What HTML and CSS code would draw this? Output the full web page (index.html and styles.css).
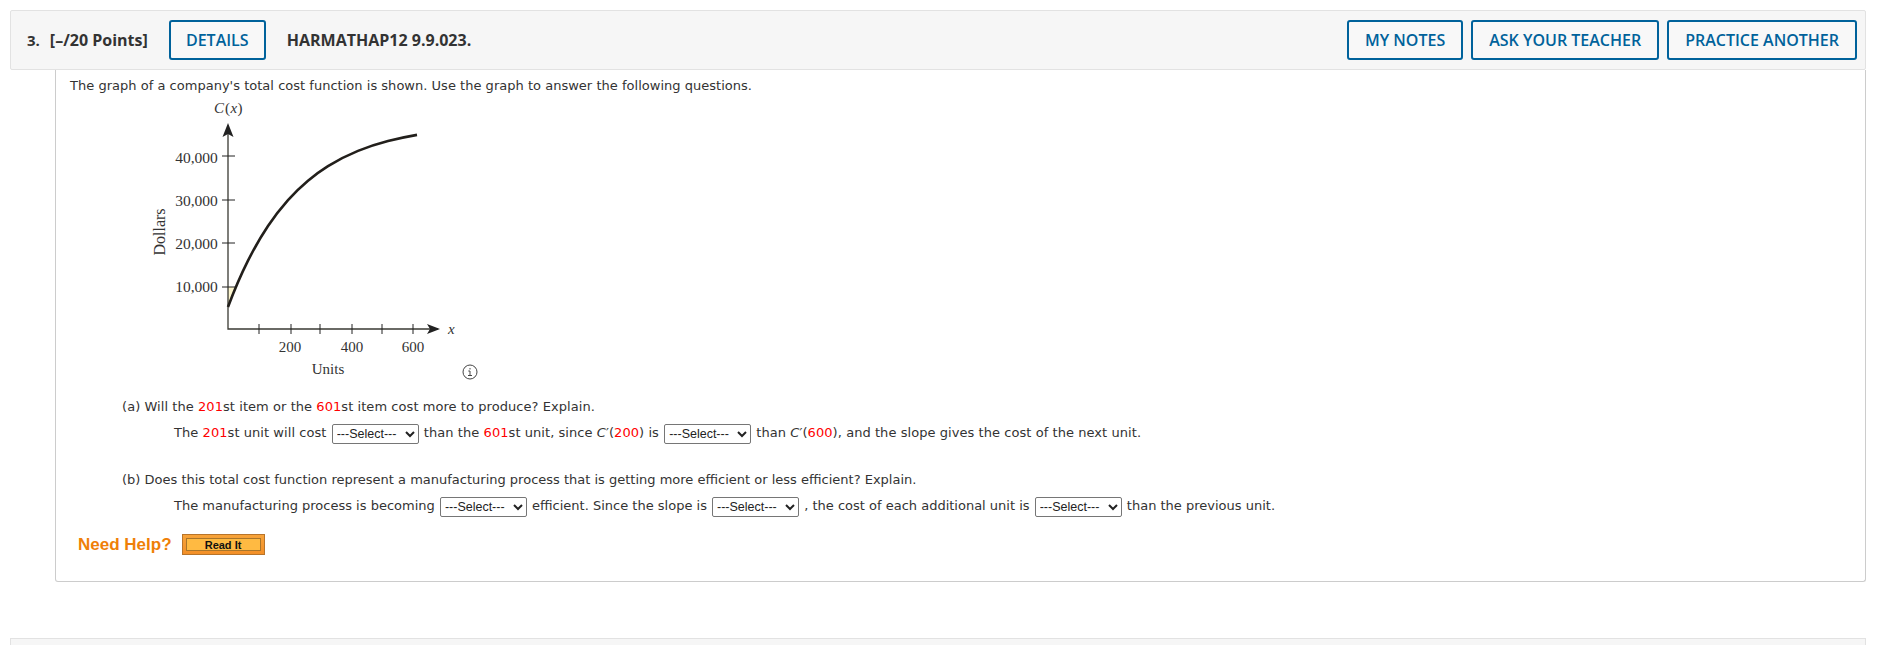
FILE: index.html
```html
<!DOCTYPE html>
<html lang="en">
<head>
<meta charset="utf-8">
<title>Question 3</title>
<link rel="stylesheet" href="styles.css">
</head>
<body>
<section class="question">
  <header class="bar">
    <span class="num">3.</span>
    <span class="points">[–/20 Points]</span>
    <button class="btn details">DETAILS</button>
    <span class="code">HARMATHAP12 9.9.023.</span>
    <div class="actions">
      <button class="btn">MY NOTES</button>
      <button class="btn">ASK YOUR TEACHER</button>
      <button class="btn">PRACTICE ANOTHER</button>
    </div>
  </header>
  <div class="card">
    <p class="intro">The graph of a company's total cost function is shown. Use the graph to answer the following questions.</p>
    <svg class="graph" width="340" height="290" viewBox="0 0 340 290">
      <text class="g-it" x="64" y="20">C</text><text class="g-t" x="75" y="20">(</text><text class="g-it" x="80.500" y="20">x</text><text class="g-t" x="87.500" y="20">)</text>
      <path class="fill" d="M78 194H85C83 200 80 207 78 214Z"/>
      <path class="axis" d="M78 34V236H288"/>
      <path class="head" d="M78 30L83.500 44L78 41L72.500 44Z"/>
      <path class="head" d="M290 236L277 231L280 236L277 241Z"/>
      <path class="tick" d="M72 63H85M72 107H85M72 150H85M72 194H85M109 231V241M141 231V241M170 231V241M202 231V241M232 231V241M263 231V241"/>
      <path class="curve" d="M78 214C84.670 196.200 91.330 181 98 167.700C104.670 154.400 111.330 143 118 133C124.670 123 131.330 114.600 138 107.100C144.670 99.600 151.330 93.300 158 87.700C164.670 82.100 171.330 77.400 178 73.200C188 66.900 198 61.950 208 57.900C218 53.850 228 50.700 238 48.100C247.670 45.570 257.330 43.560 267 41.900"/>
      <text class="g-t g-num" x="46.500" y="70" text-anchor="middle">40,000</text>
      <text class="g-t g-num" x="46.500" y="113" text-anchor="middle">30,000</text>
      <text class="g-t g-num" x="46.500" y="156" text-anchor="middle">20,000</text>
      <text class="g-t g-num" x="46.500" y="199" text-anchor="middle">10,000</text>
      <text class="g-t" x="140" y="259" text-anchor="middle">200</text>
      <text class="g-t" x="202" y="259" text-anchor="middle">400</text>
      <text class="g-t" x="263" y="259" text-anchor="middle">600</text>
      <text class="g-it" x="298" y="241">x</text>
      <text class="g-t" x="178" y="281" text-anchor="middle">Units</text>
      <text class="g-t g-lg" transform="translate(15 139) rotate(-90)" text-anchor="middle">Dollars</text>
      <circle class="info" cx="320" cy="279" r="7"/>
      <path class="info-i" d="M320 275V276.500M318.300 278H320V282.500M318 282.500H322"/>
    </svg>
    <div class="part first">
      <p class="prompt">(a) Will the <b class="red">201</b>st item or the <b class="red">601</b>st item cost more to produce? Explain.</p>
      <p class="answer">The <b class="red">201</b>st unit will cost <select><option>---Select---</option></select> than the <b class="red">601</b>st unit, since <i>C</i>′(<b class="red">200</b>) is <select><option>---Select---</option></select> than <i>C</i>′(<b class="red">600</b>), and the slope gives the cost of the next unit.</p>
    </div>
    <div class="part second">
      <p class="prompt">(b) Does this total cost function represent a manufacturing process that is getting more efficient or less efficient? Explain.</p>
      <p class="answer">The manufacturing process is becoming <select><option>---Select---</option></select> efficient. Since the slope is <select><option>---Select---</option></select> , the cost of each additional unit is <select><option>---Select---</option></select> than the previous unit.</p>
    </div>
    <div class="help">
      <span class="need">Need Help?</span>
      <span class="readit"><span class="readit-in">Read It</span></span>
    </div>
  </div>
</section>
<div class="next"></div>
</body>
</html>
```
FILE: styles.css
```css
html, body { margin: 0; padding: 0; background: #fff; height: 645px; overflow: hidden; }
body { padding: 10px 15px 0 10px; box-sizing: border-box; width: 1881px; font-family: "DejaVu Sans", sans-serif; color: #3d3d3d; }
.bar { display: flex; align-items: center; height: 58px; box-sizing: content-box; border: 1px solid #e2e2e2; background: #f6f6f6; border-radius: 2px; padding: 0 8px 0 16px; font-family: "Open Sans", sans-serif; font-weight: 700; font-size: 16px; color: #333; }
.num { margin-right: 10px; font-size: 15px; }
.points { margin-right: 21px; }
.code { margin-left: 21px; }
.btn { height: 40px; box-sizing: border-box; border: 2px solid #00629b; border-radius: 3px; background: #f8f8f8; color: #00629b; font-family: "Open Sans", sans-serif; font-weight: 600; font-size: 16px; padding: 0 16px; white-space: nowrap; }
.details { width: 97px; padding: 0; }
.actions { margin-left: auto; display: flex; gap: 8px; }
.card { margin-left: 45px; height: 512px; box-sizing: border-box; border: 1px solid #ccc; border-top: 0; border-radius: 0 0 3px 3px; padding: 8px 0 0 14px; font-size: 13px; color: #333; position: relative; }
p { margin: 0; }
.intro { line-height: 15px; letter-spacing: 0.02px; }
.graph { display: block; margin: 0 0 0 80px; height: 290px; }
.g-t, .g-it { font-family: "Liberation Serif", serif; font-size: 15px; fill: #333; }
.g-num { font-size: 15.500px; }
.g-lg { font-size: 16px; }
.g-it { font-style: italic; }
.fill { fill: #fdf6cf; }
.axis { fill: none; stroke: #3a3a33; stroke-width: 1.300; }
.tick { fill: none; stroke: #222; stroke-width: 1; }
.head { fill: #222; }
.curve { fill: none; stroke: #221f1b; stroke-width: 2.600; }
.info { fill: #fff; stroke: #444; stroke-width: 1; }
.info-i { fill: none; stroke: #444; stroke-width: 1; }
.part { margin-left: 52px; margin-top: 15px; }
.part.first { letter-spacing: 0.06px; }
.part.second { margin-top: 27px; }
.prompt { line-height: 18px; }
.answer { margin: 6px 0 0 52px; line-height: 22px; white-space: nowrap; }
.red { color: #ff0000; font-weight: normal; }
select { font-family: "Liberation Sans", sans-serif; font-size: 12.500px; height: 20px; width: 87px; padding: 0; border: 1px solid #767676; border-radius: 2px; background: #fff; color: #222; vertical-align: middle; margin: 0 1px; }
.help { display: flex; align-items: center; margin: 17px 0 0 8px; gap: 10px; }
.need { font-family: "Liberation Sans", sans-serif; font-weight: bold; font-size: 17px; color: #ef7f08; }
.readit { display: block; width: 83px; height: 21px; box-sizing: border-box; padding: 3px; background: linear-gradient(#f7a33a, #f38f27); border: 1px solid #b8742a; }
.readit-in { display: flex; align-items: center; justify-content: center; height: 100%; box-sizing: border-box; border: 1px solid #a8752a; background: #ffba42; font-family: "Liberation Sans", sans-serif; font-weight: bold; font-size: 11px; color: #111; }
.next { margin-top: 56px; height: 30px; border: 1px solid #e2e2e2; background: #f6f6f6; }
```
